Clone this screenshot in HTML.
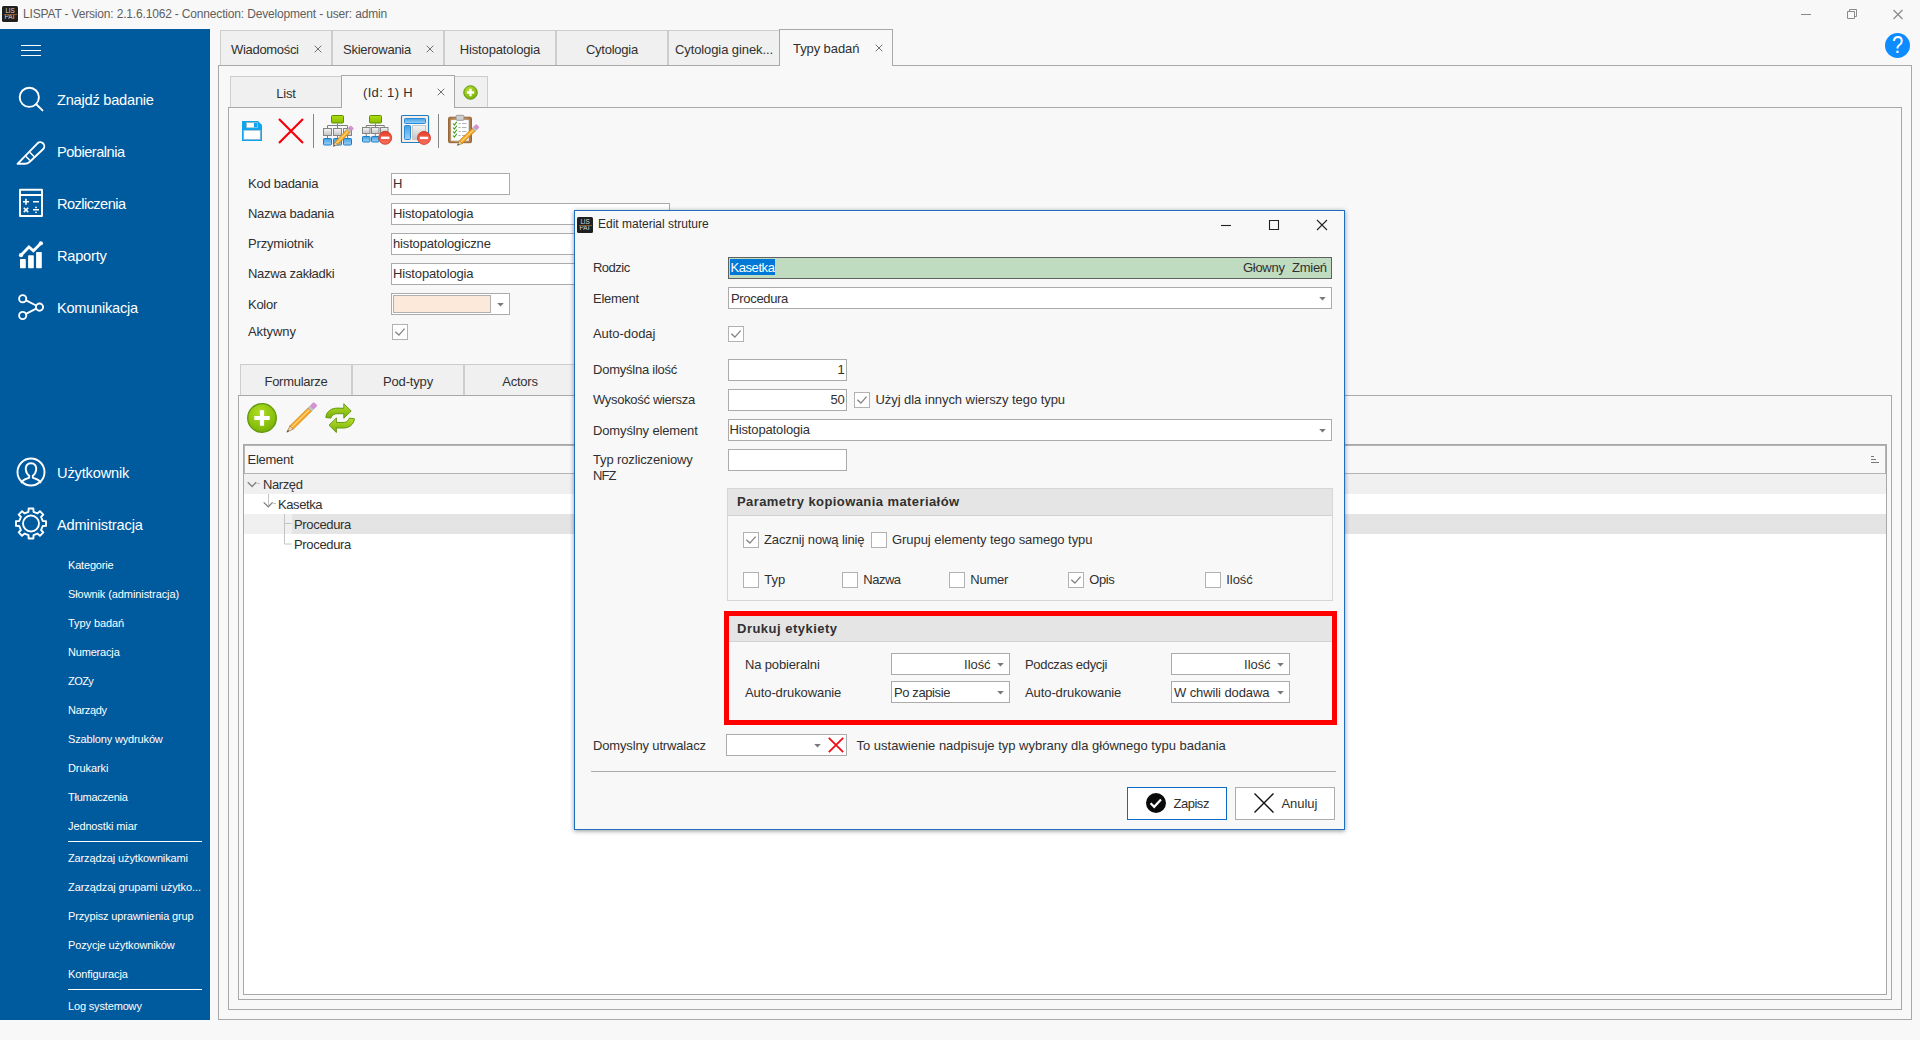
<!DOCTYPE html><html lang="pl"><head><meta charset="utf-8"><title>LISPAT</title><style>
html,body{margin:0;padding:0}
body{width:1920px;height:1040px;overflow:hidden;background:#f8f8f8;position:relative;font-family:"Liberation Sans",sans-serif;font-size:13px;color:#303030;line-height:16px}
.b{position:absolute;box-sizing:border-box}
.t{position:absolute;white-space:pre;line-height:16px}
.w{color:#fff}
.pnl{border:1px solid #a8a8a8;background:#f8f8f8}
.tab{background:#f0f0f0;border:1px solid #cdcdcd;border-bottom:none}
.tabA{background:#f8f8f8;border:1px solid #a8a8a8;border-bottom:none}
.inp{background:#fff;border:1px solid #ababab}
.chk{background:#fff;border:1px solid #b2b2b2}
.ghd{background:#e5e5e5;border-bottom:1px solid #d2d2d2}
.grp{border:1px solid #d6d6d6;background:#f8f8f8}
svg{position:absolute;overflow:visible}
</style></head><body>
<div class="b" style="left:2px;top:6px;width:16px;height:16px;background:#1f1f1f;border-radius:1.5px;box-shadow:0 0 0 1px #fff;color:#dcdcdc;font-size:6.4px;line-height:6.6px;text-align:center;letter-spacing:-0.2px;padding-top:1.8px">LIS<br>PAT</div>
<div class="b " style="left:3.5px;top:13.7px;width:13px;height:0.6px;background:#8a5a2c"></div>
<div class="t " style="left:23px;top:5.84px;font-size:12px;letter-spacing:-0.17px;color:#5f5f5f">LISPAT - Version: 2.1.6.1062 - Connection: Development - user: admin</div>
<svg style="left:1790px;top:0" width="130" height="29" viewBox="0 0 130 29"><g stroke="#8a8a8a" stroke-width="1" fill="none"><path d="M11 14.500h10"/><path d="M57.500 11.500h7v7h-7z"/><path d="M59.500 11.500v-2h7v7h-2"/><path d="M103.500 10l9 9M112.500 10l-9 9" stroke-width="1.200"/></g></svg>
<div class="b" style="left:1885px;top:33px;width:25px;height:25px;border-radius:50%;background:#0c8cff;color:#fff;font-size:23.500px;line-height:25px;text-align:center"><span style="display:inline-block;transform:scaleX(.86)">?</span></div>
<div class="b " style="left:0px;top:29px;width:210px;height:991px;background:#005a9e"></div>
<div class="b " style="left:21px;top:45px;width:20px;height:1.2px;background:#fff"></div>
<div class="b " style="left:21px;top:50px;width:20px;height:1.2px;background:#fff"></div>
<div class="b " style="left:21px;top:55px;width:20px;height:1.2px;background:#fff"></div>
<div class="t w" style="left:57px;top:91.94px;font-size:14.6px;letter-spacing:-0.22px;">Znajdź badanie</div>
<div class="t w" style="left:57px;top:143.94px;font-size:14.6px;letter-spacing:-0.50px;">Pobieralnia</div>
<div class="t w" style="left:57px;top:195.94px;font-size:14.6px;letter-spacing:-0.56px;">Rozliczenia</div>
<div class="t w" style="left:57px;top:247.94px;font-size:14.6px;letter-spacing:-0.22px;">Raporty</div>
<div class="t w" style="left:57px;top:299.94px;font-size:14.6px;letter-spacing:-0.25px;">Komunikacja</div>
<div class="t w" style="left:57px;top:464.94px;font-size:14.6px;letter-spacing:-0.16px;">Użytkownik</div>
<div class="t w" style="left:57px;top:516.94px;font-size:14.6px;letter-spacing:-0.14px;">Administracja</div>
<div class="t w" style="left:68px;top:557.19px;font-size:11px;letter-spacing:-0.18px;">Kategorie</div>
<div class="t w" style="left:68px;top:586.19px;font-size:11px;letter-spacing:-0.09px;">Słownik (administracja)</div>
<div class="t w" style="left:68px;top:615.19px;font-size:11px;letter-spacing:-0.08px;">Typy badań</div>
<div class="t w" style="left:68px;top:644.19px;font-size:11px;letter-spacing:-0.18px;">Numeracja</div>
<div class="t w" style="left:68px;top:673.19px;font-size:11px;letter-spacing:-0.56px;">ZOZy</div>
<div class="t w" style="left:68px;top:702.19px;font-size:11px;letter-spacing:-0.31px;">Narządy</div>
<div class="t w" style="left:68px;top:731.19px;font-size:11px;letter-spacing:-0.15px;">Szablony wydruków</div>
<div class="t w" style="left:68px;top:760.19px;font-size:11px;letter-spacing:-0.08px;">Drukarki</div>
<div class="t w" style="left:68px;top:789.19px;font-size:11px;letter-spacing:-0.25px;">Tłumaczenia</div>
<div class="t w" style="left:68px;top:818.19px;font-size:11px;letter-spacing:-0.12px;">Jednostki miar</div>
<div class="t w" style="left:68px;top:850.19px;font-size:11px;letter-spacing:-0.13px;">Zarządzaj użytkownikami</div>
<div class="t w" style="left:68px;top:879.19px;font-size:11px;letter-spacing:-0.08px;">Zarządzaj grupami użytko...</div>
<div class="t w" style="left:68px;top:908.19px;font-size:11px;letter-spacing:-0.14px;">Przypisz uprawnienia grup</div>
<div class="t w" style="left:68px;top:937.19px;font-size:11px;letter-spacing:-0.14px;">Pozycje użytkowników</div>
<div class="t w" style="left:68px;top:966.19px;font-size:11px;letter-spacing:-0.12px;">Konfiguracja</div>
<div class="t w" style="left:68px;top:998.19px;font-size:11px;letter-spacing:-0.16px;">Log systemowy</div>
<div class="b " style="left:68px;top:841px;width:134px;height:1.3px;background:#fff"></div>
<div class="b " style="left:68px;top:989px;width:134px;height:1.3px;background:#fff"></div>
<svg style="left:0;top:0" width="60" height="560" viewBox="0 0 60 560">
<g stroke="#fff" fill="none" stroke-width="1.9" stroke-linecap="round" stroke-linejoin="round"><circle cx="29.300" cy="97.300" r="9.600"/><path d="M36.200 104.200l6.300 6.200"/></g>
<g stroke="#fff" fill="none" stroke-width="1.9" stroke-linecap="round" stroke-linejoin="round" stroke-linejoin="miter"><path d="M17.500 163.800L25 163.800Q27.500 163.800 29.500 162L43 149.200A3.900 3.900 0 0 0 37.500 143.300Z"/><path d="M26.300 156.800l3.200 3.200M30.300 152.800l3.200 3.200" stroke-width="1.500"/></g>
<g stroke="#fff" fill="none" stroke-width="1.9" stroke-linecap="round" stroke-linejoin="round" stroke-linejoin="miter"><rect x="20" y="189.700" width="22" height="26.300"/><path d="M20 195h22"/><g stroke-width="1.600" stroke-linecap="butt"><path d="M23 201.800h6M26 198.800v6M33 201.800h6M23.800 207.700l4.400 4.400M28.200 207.700l-4.400 4.400M33 209.800h6"/></g><circle cx="36" cy="207.400" r="0.900" fill="#fff" stroke="none"/><circle cx="36" cy="212.300" r="0.900" fill="#fff" stroke="none"/></g>
<g fill="#fff"><rect x="20" y="259" width="5.800" height="9.200" rx="0.800"/><rect x="28.100" y="255.300" width="5.700" height="12.900" rx="0.800"/><rect x="36.100" y="251.900" width="5.700" height="16.300" rx="0.800"/><circle cx="21" cy="255.200" r="2.100"/><circle cx="40.900" cy="243.300" r="2.100"/></g><path d="M21 255.200L28.900 247L33.400 250.800L40.900 243.300" stroke="#fff" stroke-width="2.800" fill="none" stroke-linejoin="miter"/>
<g stroke="#fff" fill="none" stroke-width="1.9" stroke-linecap="round" stroke-linejoin="round" stroke-width="1.700"><circle cx="22.700" cy="298.700" r="3.600"/><circle cx="22.700" cy="315.500" r="3.600"/><circle cx="39.500" cy="307.100" r="3.600"/><path d="M26 300.300l10.200 5.200M26 313.900l10.200-5.200"/></g>
<g stroke="#fff" fill="none" stroke-width="1.9" stroke-linecap="round" stroke-linejoin="round" stroke-width="1.200"><circle cx="31" cy="472" r="13.500"/><path d="M31 463.200c-3.800 0-5.600 2.800-5.200 6.400c.4 3.200 2 5.200 3.400 6.200v1.800c-2 1.400-6 1.200-7.600 4.800M31 463.200c3.800 0 5.600 2.800 5.200 6.400c-.4 3.200-2 5.200-3.400 6.200v1.800c2 1.400 6 1.200 7.600 4.800"/></g>
<g stroke="#fff" fill="none" stroke-width="1.9" stroke-linecap="round" stroke-linejoin="round" stroke-width="1.300" stroke-linejoin="miter"><path d="M28.62 508.49L33.38 508.49L33.53 511.77L37.51 513.42L39.93 511.20L43.30 514.57L41.08 516.99L42.73 520.97L46.01 521.12L46.01 525.88L42.73 526.03L41.08 530.01L43.30 532.43L39.93 535.80L37.51 533.58L33.53 535.23L33.38 538.51L28.62 538.51L28.47 535.23L24.49 533.58L22.07 535.80L18.70 532.43L20.92 530.01L19.27 526.03L15.99 525.88L15.99 521.12L19.27 520.97L20.92 516.99L18.70 514.57L22.07 511.20L24.49 513.42L28.47 511.77Z"/><circle cx="31" cy="523.500" r="8"/></g>
</svg>
<div class="b pnl" style="left:218px;top:65px;width:1694px;height:955px;"></div>
<div class="b tab" style="left:220px;top:30px;width:112px;height:35px;"></div>
<div class="t " style="left:231px;top:41.50px;letter-spacing:-0.31px;">Wiadomości</div>
<svg style="left:314px;top:45px" width="8" height="8" viewBox="0 0 8 8"><path d="M0.700 0.700l6.600 6.600M7.300 0.700l-6.600 6.600" stroke="#707070" stroke-width="1" fill="none"/></svg>
<div class="b tab" style="left:332px;top:30px;width:112px;height:35px;"></div>
<div class="t " style="left:343px;top:41.50px;letter-spacing:-0.26px;">Skierowania</div>
<svg style="left:426px;top:45px" width="8" height="8" viewBox="0 0 8 8"><path d="M0.700 0.700l6.600 6.600M7.300 0.700l-6.600 6.600" stroke="#707070" stroke-width="1" fill="none"/></svg>
<div class="b tab" style="left:444px;top:30px;width:112px;height:35px;"></div>
<div class="t " style="left:459.779014px;top:41.50px;letter-spacing:-0.14px;">Histopatologia</div>
<div class="b tab" style="left:556px;top:30px;width:112px;height:35px;"></div>
<div class="t " style="left:585.95879px;top:41.50px;letter-spacing:-0.24px;">Cytologia</div>
<div class="b tab" style="left:668px;top:30px;width:112px;height:35px;"></div>
<div class="t " style="left:674.923076px;top:41.50px;letter-spacing:-0.09px;">Cytologia ginek...</div>
<div class="b tabA" style="left:779px;top:29px;width:114px;height:37px;"></div>
<div class="t " style="left:793px;top:40.50px;letter-spacing:-0.09px;">Typy badań</div>
<svg style="left:875px;top:44px" width="8" height="8" viewBox="0 0 8 8"><path d="M0.700 0.700l6.600 6.600M7.300 0.700l-6.600 6.600" stroke="#707070" stroke-width="1" fill="none"/></svg>
<div class="b pnl" style="left:228px;top:107px;width:1674px;height:903px;"></div>
<div class="b tab" style="left:230px;top:76px;width:112px;height:31px;"></div>
<div class="t " style="left:276.315624px;top:85.50px;letter-spacing:-0.22px;">List</div>
<div class="b tab" style="left:454px;top:76px;width:34px;height:31px;"></div>
<div class="b tabA" style="left:341px;top:75px;width:114px;height:33px;"></div>
<div class="t " style="left:363px;top:84.50px;letter-spacing:0.34px;">(Id: 1) H</div>
<svg style="left:437px;top:88px" width="8" height="8" viewBox="0 0 8 8"><path d="M0.700 0.700l6.600 6.600M7.300 0.700l-6.600 6.600" stroke="#707070" stroke-width="1" fill="none"/></svg>
<svg style="left:463px;top:85px" width="15" height="15" viewBox="0 0 15 15"><defs><radialGradient id="g0" cx="0.4" cy="0.3" r="0.8"><stop offset="0" stop-color="#b4dc2c"/><stop offset="1" stop-color="#74aa08"/></radialGradient></defs><circle cx="7.500" cy="7.500" r="6.800" fill="url(#g0)" stroke="#5e960a" stroke-width="0.900"/><path d="M7.500 3.800v7.400M3.800 7.500h7.400" stroke="#fff" stroke-width="2.300"/></svg>
<svg style="left:0;top:0" width="500" height="160" viewBox="0 0 500 160"><defs><linearGradient id="gn" x1="0" y1="0" x2="0" y2="1"><stop offset="0" stop-color="#b2de10"/><stop offset="1" stop-color="#86bc00"/></linearGradient><linearGradient id="gg2" x1="0" y1="0" x2="0" y2="1"><stop offset="0" stop-color="#f4f4f4"/><stop offset="1" stop-color="#c4c4c4"/></linearGradient><linearGradient id="gb" x1="0" y1="0" x2="0" y2="1"><stop offset="0" stop-color="#3ea0e6"/><stop offset="1" stop-color="#9fd2f8"/></linearGradient><linearGradient id="gr" x1="0" y1="0" x2="0" y2="1"><stop offset="0" stop-color="#e8402c"/><stop offset="1" stop-color="#f8705c"/></linearGradient><linearGradient id="gw" x1="0" y1="0" x2="1" y2="0"><stop offset="0" stop-color="#a87440"/><stop offset="0.5" stop-color="#cfa070"/><stop offset="1" stop-color="#a87440"/></linearGradient></defs><path d="M242 121h16l4 4v16h-20z" fill="#0ea5ee"/><rect x="243.800" y="130.300" width="16.400" height="9" fill="#fff" stroke="#a8b8c2" stroke-width="0.600"/><rect x="246.500" y="122.600" width="11.200" height="5.200" fill="#fff" stroke="#9ab0bc" stroke-width="0.600"/><rect x="254" y="123" width="3.200" height="4.400" fill="#0ea5ee"/><path d="M279 119l24 24M303 119l-24 24" stroke="#f4000c" stroke-width="2.200" fill="none"/><path d="M313.500 114v34M438.500 114v34" stroke="#868686" stroke-width="1"/><rect x="331.5" y="115.5" width="12" height="7.500" rx="1" fill="url(#gn)" stroke="#5a9206" stroke-width="1"/><path d="M337.5 123.5V128.5M327.5 128.5V125.5H347.5V128.5" stroke="#7e7e7e" fill="none" stroke-width="1"/><rect x="323.5" y="128.5" width="8" height="7" fill="url(#gg2)" stroke="#858585" stroke-width="1"/><path d="M327.5 135.5V138.5" stroke="#7e7e7e" stroke-width="1"/><rect x="323.5" y="138.5" width="8" height="6.5" rx="0.800" fill="url(#gb)" stroke="#1c7cc0" stroke-width="1"/><rect x="333.5" y="128.5" width="8" height="7" fill="url(#gg2)" stroke="#858585" stroke-width="1"/><path d="M337.5 135.5V138.5" stroke="#7e7e7e" stroke-width="1"/><rect x="333.5" y="138.5" width="8" height="6.5" rx="0.800" fill="url(#gb)" stroke="#1c7cc0" stroke-width="1"/><rect x="343.5" y="128.5" width="8" height="7" fill="url(#gg2)" stroke="#858585" stroke-width="1"/><path d="M347.5 135.5V138.5" stroke="#7e7e7e" stroke-width="1"/><rect x="343.5" y="138.5" width="8" height="6.5" rx="0.800" fill="url(#gb)" stroke="#1c7cc0" stroke-width="1"/><g transform="translate(333.4 146.4) rotate(-45.90)"><path d="M0 0L4.59 -2.1L4.59 2.1Z" fill="#f1d3a0" stroke="#7a5a28" stroke-width="0.500"/><path d="M0 0L1.62 -0.76L1.62 0.76Z" fill="#3a3a3a"/><rect x="4.59" y="-2.1" width="17.02" height="4.2" fill="#f7a51c" stroke="#b8720c" stroke-width="0.500"/><rect x="4.59" y="-0.73" width="17.02" height="1.26" fill="#fdd27a"/><rect x="21.61" y="-2.1" width="2.16" height="4.2" fill="#c4c4c4" stroke="#8e8e8e" stroke-width="0.400"/><rect x="23.77" y="-2.1" width="3.24" height="4.2" rx="1.200" fill="#dd8fd6" stroke="#b46eb0" stroke-width="0.400"/></g><rect x="369.5" y="115.5" width="12" height="7.500" rx="1" fill="url(#gn)" stroke="#5a9206" stroke-width="1"/><path d="M375.5 123.5V127.5M366.25 127.5V125.5H384.25V127.5" stroke="#7e7e7e" fill="none" stroke-width="1"/><rect x="362.5" y="127.5" width="7.5" height="6" fill="url(#gg2)" stroke="#858585" stroke-width="1"/><path d="M366.25 133.5V136.5" stroke="#7e7e7e" stroke-width="1"/><rect x="362.5" y="136.5" width="7.5" height="5.5" rx="0.800" fill="url(#gb)" stroke="#1c7cc0" stroke-width="1"/><rect x="371.5" y="127.5" width="7.5" height="6" fill="url(#gg2)" stroke="#858585" stroke-width="1"/><path d="M375.25 133.5V136.5" stroke="#7e7e7e" stroke-width="1"/><rect x="371.5" y="136.5" width="7.5" height="5.5" rx="0.800" fill="url(#gb)" stroke="#1c7cc0" stroke-width="1"/><rect x="380.5" y="127.5" width="7.5" height="6" fill="url(#gg2)" stroke="#858585" stroke-width="1"/><circle cx="385.2" cy="137.8" r="6.5" fill="url(#gr)" stroke="#c8311f" stroke-width="0.800"/><rect x="381.0" y="136.60000000000002" width="8.400" height="2.400" fill="#fff"/><rect x="401.500" y="115.500" width="27" height="27" rx="1" fill="#fff" stroke="#1a7fc4" stroke-width="1.200"/><rect x="403" y="117" width="24" height="24" fill="none" stroke="#f6dccc" stroke-width="1"/><rect x="404.500" y="118.500" width="21" height="5" rx="0.800" fill="url(#gb)" stroke="#2a8ad4" stroke-width="1"/><rect x="404.500" y="125.500" width="6" height="14" rx="0.800" fill="url(#gb)" stroke="#2a8ad4" stroke-width="1"/><rect x="412.500" y="125.500" width="13" height="14" fill="url(#gg2)" stroke="#c8c8c8" stroke-width="1"/><circle cx="424" cy="137.9" r="6.5" fill="url(#gr)" stroke="#c8311f" stroke-width="0.800"/><rect x="419.8" y="136.70000000000002" width="8.400" height="2.400" fill="#fff"/><rect x="448.500" y="117.200" width="23" height="25.500" rx="1.200" fill="url(#gw)" stroke="#8e5e2c" stroke-width="0.900"/><rect x="451" y="120" width="17.800" height="20.800" fill="#fff" stroke="#c8d0dc" stroke-width="0.500"/><rect x="456" y="115.300" width="8" height="5" rx="1.200" fill="#cfcfcf" stroke="#8c8c8c" stroke-width="0.800"/><path d="M453 123.5l1.400 1.600l2.400-3.400" stroke="#3a9a10" stroke-width="1.100" fill="none"/><path d="M458.500 123.5h2.200M462 123.5h4.500" stroke="#a8a8a8" stroke-width="0.900"/><path d="M453 127.5l1.400 1.600l2.400-3.400" stroke="#3a9a10" stroke-width="1.100" fill="none"/><path d="M458.500 127.5h2.200M462 127.5h4.500" stroke="#a8a8a8" stroke-width="0.900"/><path d="M453 131.5l1.400 1.600l2.400-3.400" stroke="#3a9a10" stroke-width="1.100" fill="none"/><path d="M458.500 131.5h2.200M462 131.5h4.500" stroke="#a8a8a8" stroke-width="0.900"/><path d="M453 135.5l1.400 1.600l2.400-3.400" stroke="#3a9a10" stroke-width="1.100" fill="none"/><path d="M458.500 135.5h2.200M462 135.5h4.500" stroke="#a8a8a8" stroke-width="0.900"/><g transform="translate(457.4 145.4) rotate(-43.85)"><path d="M0 0L4.81 -2.1L4.81 2.1Z" fill="#f1d3a0" stroke="#7a5a28" stroke-width="0.500"/><path d="M0 0L1.70 -0.76L1.70 0.76Z" fill="#3a3a3a"/><rect x="4.81" y="-2.1" width="17.82" height="4.2" fill="#f7a51c" stroke="#b8720c" stroke-width="0.500"/><rect x="4.81" y="-0.73" width="17.82" height="1.26" fill="#fdd27a"/><rect x="22.63" y="-2.1" width="2.26" height="4.2" fill="#c4c4c4" stroke="#8e8e8e" stroke-width="0.400"/><rect x="24.90" y="-2.1" width="3.39" height="4.2" rx="1.200" fill="#dd8fd6" stroke="#b46eb0" stroke-width="0.400"/></g></svg>
<div class="t " style="left:248px;top:175.50px;letter-spacing:-0.26px;">Kod badania</div>
<div class="t " style="left:248px;top:205.50px;letter-spacing:-0.29px;">Nazwa badania</div>
<div class="t " style="left:248px;top:235.50px;letter-spacing:-0.17px;">Przymiotnik</div>
<div class="t " style="left:248px;top:265.50px;letter-spacing:-0.29px;">Nazwa zakładki</div>
<div class="t " style="left:248px;top:296.50px;letter-spacing:-0.27px;">Kolor</div>
<div class="t " style="left:248px;top:323.50px;letter-spacing:-0.07px;">Aktywny</div>
<div class="b inp" style="left:391px;top:173px;width:119px;height:22px;"></div>
<div class="t " style="left:393px;top:175.50px;letter-spacing:-0.71px;">H</div>
<div class="b inp" style="left:391px;top:203px;width:279px;height:22px;"></div>
<div class="t " style="left:393px;top:205.50px;letter-spacing:-0.14px;">Histopatologia</div>
<div class="b inp" style="left:391px;top:233px;width:279px;height:22px;"></div>
<div class="t " style="left:393px;top:235.50px;letter-spacing:-0.16px;">histopatologiczne</div>
<div class="b inp" style="left:391px;top:263px;width:279px;height:22px;"></div>
<div class="t " style="left:393px;top:265.50px;letter-spacing:-0.14px;">Histopatologia</div>
<div class="b inp" style="left:391px;top:293px;width:119px;height:22px;"></div>
<div class="b " style="left:393px;top:295px;width:98px;height:18px;background:#fde9d9;border:1px solid #b0b0b0"></div>
<svg style="left:496.5px;top:303.0px" width="7" height="4" viewBox="0 0 7 4"><path d="M0.200 0h6.600l-3.300 3.500z" fill="#7a7a7a"/></svg>
<div class="b chk" style="left:392px;top:324px;width:16px;height:16px;"></div>
<svg style="left:392px;top:324px" width="16" height="16" viewBox="0 0 16 16"><path d="M3.300 7.700l3.600 3.400l5.700-6.500" stroke="#858585" stroke-width="1.400" fill="none"/></svg>
<div class="b pnl" style="left:238px;top:395px;width:1654px;height:605px;"></div>
<div class="b tab" style="left:240px;top:364px;width:112px;height:31px;"></div>
<div class="t " style="left:264.493668px;top:373.50px;letter-spacing:-0.27px;">Formularze</div>
<div class="b tab" style="left:352px;top:364px;width:112px;height:31px;"></div>
<div class="t " style="left:382.999154px;top:373.50px;letter-spacing:-0.16px;">Pod-typy</div>
<div class="b tab" style="left:464px;top:364px;width:112px;height:31px;"></div>
<div class="t " style="left:502.37161000000003px;top:373.50px;letter-spacing:-0.26px;">Actors</div>
<svg style="left:0;top:0" width="400" height="440" viewBox="0 0 400 440"><defs><radialGradient id="gg" cx="0.42" cy="0.3" r="0.8"><stop offset="0" stop-color="#b0dc24"/><stop offset="0.7" stop-color="#86be0a"/><stop offset="1" stop-color="#6ea406"/></radialGradient><linearGradient id="ga" x1="0" y1="0" x2="0" y2="1"><stop offset="0" stop-color="#b6e02c"/><stop offset="1" stop-color="#78ae08"/></linearGradient></defs><circle cx="262" cy="418" r="14.300" fill="url(#gg)" stroke="#5e980a" stroke-width="1.300"/><path d="M262 410.300v15.400M254.300 418h15.400" stroke="#fff" stroke-width="4.200"/><g transform="translate(286.8 432.2) rotate(-44.50)"><path d="M0 0L6.84 -2.4L6.84 2.4Z" fill="#f1d3a0" stroke="#7a5a28" stroke-width="0.500"/><path d="M0 0L2.41 -0.86L2.41 0.86Z" fill="#3a3a3a"/><rect x="6.84" y="-2.4" width="25.35" height="4.8" fill="#f7a51c" stroke="#b8720c" stroke-width="0.500"/><rect x="6.84" y="-0.84" width="25.35" height="1.44" fill="#fdd27a"/><rect x="32.19" y="-2.4" width="3.22" height="4.8" fill="#c4c4c4" stroke="#8e8e8e" stroke-width="0.400"/><rect x="35.41" y="-2.4" width="4.83" height="4.8" rx="1.200" fill="#dd8fd6" stroke="#b46eb0" stroke-width="0.400"/></g><g fill="url(#ga)" stroke="#5c9408" stroke-width="0.900" stroke-linejoin="round"><path d="M325.800 417.500c0.600-6.200 5.600-9.600 12.200-9.400l5.800 0.200v-4.600l7.400 7.300l-7.400 7.300v-4.600h-5.600c-3.600-0.200-6.200 1-7.400 4.400z"/><path d="M354.400 418.700c-0.600 6.200-5.600 9.600-12.200 9.400l-5.800-0.200v4.600l-7.400-7.300l7.400-7.300v4.600h5.600c3.600 0.200 6.200-1 7.400-4.400z"/></g></svg>
<div class="b " style="left:243px;top:444px;width:1644px;height:551px;border:1px solid #a8a8a8;background:#fff"></div>
<div class="b " style="left:244px;top:445px;width:1642px;height:29px;border:1px solid #b4b4b4;background:#f8f8f8"></div>
<div class="t " style="left:247.5px;top:451.50px;letter-spacing:-0.26px;">Element</div>
<svg style="left:1871px;top:455px" width="10" height="10" viewBox="0 0 10 10"><path d="M0 1.500h3M0 4.500h5M0 7.500h8" stroke="#777" stroke-width="1" fill="none"/></svg>
<div class="b " style="left:244px;top:474px;width:1642px;height:20px;background:#f0f0f0"></div>
<div class="b " style="left:244px;top:514px;width:1642px;height:20px;background:#f0f0f0"></div>
<div class="b " style="left:292px;top:514px;width:1594px;height:20px;background:#e4e4e4"></div>
<div class="t " style="left:263px;top:476.50px;letter-spacing:-0.40px;">Narzęd</div>
<div class="t " style="left:278px;top:496.50px;letter-spacing:-0.40px;">Kasetka</div>
<div class="t " style="left:294px;top:516.50px;letter-spacing:-0.33px;">Procedura</div>
<div class="t " style="left:294px;top:536.50px;letter-spacing:-0.33px;">Procedura</div>
<svg style="left:244px;top:474px" width="50" height="80" viewBox="0 0 50 80"><g stroke="#808080" fill="none" stroke-width="1.300"><path d="M3.800 8.200l4.300 4.300l4.100-4.300"/><path d="M19.700 28.400l4.600 4.400l4.300-4.400"/></g><g stroke="#c4c4c4" fill="none" stroke-width="1"><path d="M12.500 9.500h3.500M24.500 20v11.500M29 29.500h3M40.500 40v30h7M40.500 49.500h7"/></g></svg>
<div class="b " style="left:574px;top:210px;width:771px;height:620px;background:#f8f8f8;border:1px solid #1f6fbe;box-shadow:0 0.500px 4.500px rgba(0,0,0,.42)"></div>
<div class="b" style="left:577px;top:217px;width:16px;height:16px;background:#1f1f1f;border-radius:1.5px;color:#dcdcdc;font-size:6.4px;line-height:6.6px;text-align:center;letter-spacing:-0.2px;padding-top:1.8px">LIS<br>PAT</div>
<div class="b " style="left:578.5px;top:224.7px;width:13px;height:0.6px;background:#8a5a2c"></div>
<div class="t " style="left:598px;top:215.84px;font-size:12px;color:#2b2b2b">Edit material struture</div>
<svg style="left:1200px;top:211px" width="145" height="28" viewBox="0 0 145 28"><g stroke="#222" stroke-width="1.100" fill="none"><path d="M21 14.500h10"/><path d="M69.500 9.500h9v9h-9z"/><path d="M117 9l10 10M127 9l-10 10"/></g></svg>
<div class="t " style="left:593px;top:259.50px;letter-spacing:-0.52px;">Rodzic</div>
<div class="t " style="left:593px;top:290.50px;letter-spacing:-0.26px;">Element</div>
<div class="t " style="left:593px;top:325.50px;letter-spacing:-0.05px;">Auto-dodaj</div>
<div class="t " style="left:593px;top:361.50px;letter-spacing:-0.24px;">Domyślna ilość</div>
<div class="t " style="left:593px;top:391.50px;letter-spacing:-0.31px;">Wysokość wiersza</div>
<div class="t " style="left:593px;top:422.50px;letter-spacing:-0.14px;">Domyślny element</div>
<div class="t " style="left:593px;top:451.50px;letter-spacing:-0.13px;">Typ rozliczeniowy</div>
<div class="t " style="left:593px;top:467.50px;letter-spacing:-0.95px;">NFZ</div>
<div class="t " style="left:593px;top:737.50px;letter-spacing:-0.15px;">Domyslny utrwalacz</div>
<div class="b " style="left:728px;top:257px;width:604px;height:22px;background:#c0dcc0;border:1px solid #606060"></div>
<div class="b " style="left:730px;top:259px;width:45px;height:16px;background:#0078d7"></div>
<div class="t w" style="left:730.5px;top:259.50px;letter-spacing:-0.43px;">Kasetka</div>
<div class="t " style="left:1243px;top:260.00px;letter-spacing:-0.29px;">Głowny</div>
<div class="t " style="left:1292px;top:260.00px;letter-spacing:-0.26px;">Zmień</div>
<div class="b inp" style="left:728px;top:287px;width:604px;height:22px;"></div>
<div class="t " style="left:731px;top:290.50px;letter-spacing:-0.33px;">Procedura</div>
<svg style="left:1318.5px;top:297.0px" width="7" height="4" viewBox="0 0 7 4"><path d="M0.200 0h6.600l-3.300 3.500z" fill="#7a7a7a"/></svg>
<div class="b chk" style="left:728px;top:326px;width:16px;height:16px;"></div>
<svg style="left:728px;top:326px" width="16" height="16" viewBox="0 0 16 16"><path d="M3.300 7.700l3.600 3.400l5.700-6.500" stroke="#858585" stroke-width="1.400" fill="none"/></svg>
<div class="b inp" style="left:728px;top:359px;width:119px;height:22px;"></div>
<div class="t " style="left:728px;top:361.50px;letter-spacing:-0.22px;width:116.5px;text-align:right;">1</div>
<div class="b inp" style="left:728px;top:389px;width:119px;height:22px;"></div>
<div class="t " style="left:728px;top:391.50px;letter-spacing:-0.22px;width:116.5px;text-align:right;">50</div>
<div class="b chk" style="left:854px;top:392px;width:16px;height:16px;"></div>
<svg style="left:854px;top:392px" width="16" height="16" viewBox="0 0 16 16"><path d="M3.300 7.700l3.600 3.400l5.700-6.500" stroke="#858585" stroke-width="1.400" fill="none"/></svg>
<div class="t " style="left:875.5px;top:391.50px;letter-spacing:-0.06px;">Użyj dla innych wierszy tego typu</div>
<div class="b inp" style="left:728px;top:419px;width:604px;height:22px;"></div>
<div class="t " style="left:729.5px;top:422.00px;letter-spacing:-0.14px;">Histopatologia</div>
<svg style="left:1318.5px;top:428.5px" width="7" height="4" viewBox="0 0 7 4"><path d="M0.200 0h6.600l-3.300 3.500z" fill="#7a7a7a"/></svg>
<div class="b inp" style="left:728px;top:449px;width:119px;height:22px;"></div>
<div class="b grp" style="left:727px;top:488px;width:606px;height:113px;"></div>
<div class="b ghd" style="left:728px;top:489px;width:604px;height:27px;"></div>
<div class="t " style="left:737px;top:494.00px;letter-spacing:0.42px;font-weight:bold;">Parametry kopiowania materiałów</div>
<div class="b chk" style="left:743px;top:532px;width:16px;height:16px;"></div>
<svg style="left:743px;top:532px" width="16" height="16" viewBox="0 0 16 16"><path d="M3.300 7.700l3.600 3.400l5.700-6.500" stroke="#858585" stroke-width="1.400" fill="none"/></svg>
<div class="t " style="left:764px;top:531.50px;letter-spacing:-0.12px;">Zacznij nową linię</div>
<div class="b chk" style="left:871px;top:532px;width:16px;height:16px;"></div>
<div class="t " style="left:892px;top:531.50px;letter-spacing:-0.06px;">Grupuj elementy tego samego typu</div>
<div class="b chk" style="left:743px;top:572px;width:16px;height:16px;"></div>
<div class="t " style="left:764.3px;top:571.50px;letter-spacing:0.02px;">Typ</div>
<div class="b chk" style="left:842px;top:572px;width:16px;height:16px;"></div>
<div class="t " style="left:863.3px;top:571.50px;letter-spacing:-0.49px;">Nazwa</div>
<div class="b chk" style="left:949px;top:572px;width:16px;height:16px;"></div>
<div class="t " style="left:970.3px;top:571.50px;letter-spacing:-0.22px;">Numer</div>
<div class="b chk" style="left:1068px;top:572px;width:16px;height:16px;"></div>
<svg style="left:1068px;top:572px" width="16" height="16" viewBox="0 0 16 16"><path d="M3.300 7.700l3.600 3.400l5.700-6.500" stroke="#858585" stroke-width="1.400" fill="none"/></svg>
<div class="t " style="left:1089.3px;top:571.50px;letter-spacing:-0.46px;">Opis</div>
<div class="b chk" style="left:1205px;top:572px;width:16px;height:16px;"></div>
<div class="t " style="left:1226.3px;top:571.50px;letter-spacing:-0.07px;">Ilość</div>
<div class="b grp" style="left:727px;top:616px;width:606px;height:108px;border-color:#e8e8e8"></div>
<div class="b ghd" style="left:728px;top:616px;width:604px;height:26px;"></div>
<div class="t " style="left:737px;top:620.50px;letter-spacing:0.49px;font-weight:bold;">Drukuj etykiety</div>
<div class="b " style="left:724px;top:611px;width:613px;height:114px;border:5px solid #fe0000"></div>
<div class="t " style="left:745px;top:656.50px;letter-spacing:-0.15px;">Na pobieralni</div>
<div class="t " style="left:1025px;top:656.50px;letter-spacing:-0.33px;">Podczas edycji</div>
<div class="t " style="left:745px;top:684.50px;letter-spacing:-0.09px;">Auto-drukowanie</div>
<div class="t " style="left:1025px;top:684.50px;letter-spacing:-0.09px;">Auto-drukowanie</div>
<div class="b inp" style="left:891px;top:653px;width:119px;height:22px;"></div>
<div class="t " style="left:891px;top:656.50px;letter-spacing:-0.07px;width:99.5px;text-align:right;">Ilość</div>
<svg style="left:996.5px;top:662.5px" width="7" height="4" viewBox="0 0 7 4"><path d="M0.200 0h6.600l-3.300 3.500z" fill="#7a7a7a"/></svg>
<div class="b inp" style="left:1171px;top:653px;width:119px;height:22px;"></div>
<div class="t " style="left:1171px;top:656.50px;letter-spacing:-0.07px;width:99.5px;text-align:right;">Ilość</div>
<svg style="left:1276.5px;top:662.5px" width="7" height="4" viewBox="0 0 7 4"><path d="M0.200 0h6.600l-3.300 3.500z" fill="#7a7a7a"/></svg>
<div class="b inp" style="left:891px;top:681px;width:119px;height:22px;"></div>
<div class="t " style="left:894px;top:684.50px;letter-spacing:-0.40px;">Po zapisie</div>
<svg style="left:996.5px;top:690.5px" width="7" height="4" viewBox="0 0 7 4"><path d="M0.200 0h6.600l-3.300 3.500z" fill="#7a7a7a"/></svg>
<div class="b inp" style="left:1171px;top:681px;width:119px;height:22px;"></div>
<div class="t " style="left:1174px;top:684.50px;letter-spacing:-0.10px;">W chwili dodawa</div>
<svg style="left:1276.5px;top:690.5px" width="7" height="4" viewBox="0 0 7 4"><path d="M0.200 0h6.600l-3.300 3.500z" fill="#7a7a7a"/></svg>
<div class="b inp" style="left:726px;top:734px;width:121px;height:22px;"></div>
<svg style="left:813.5px;top:744.0px" width="7" height="4" viewBox="0 0 7 4"><path d="M0.200 0h6.600l-3.300 3.500z" fill="#7a7a7a"/></svg>
<svg style="left:828px;top:737px" width="16" height="16" viewBox="0 0 16 16"><path d="M0.800 0.800l14.400 14.400M15.200 0.800l-14.400 14.400" stroke="#f0101c" stroke-width="1.900" fill="none"/></svg>
<div class="t " style="left:856.5px;top:737.50px;">To ustawienie nadpisuje typ wybrany dla głównego typu badania</div>
<div class="b " style="left:591px;top:771px;width:745px;height:1px;background:#acacac"></div>
<div class="b " style="left:1127px;top:787px;width:100px;height:33px;background:#fff;border:1px solid #0a6cc8"></div>
<div class="b " style="left:1235px;top:787px;width:100px;height:33px;background:#fff;border:1px solid #adadad"></div>
<svg style="left:1146px;top:793px" width="20" height="20" viewBox="0 0 20 20"><circle cx="10" cy="10" r="10" fill="#0a0a0a"/><path d="M4.600 10.200l3.600 3.600l6.800-7.400" stroke="#fff" stroke-width="2.200" fill="none"/></svg>
<div class="t " style="left:1173.5px;top:795.50px;letter-spacing:-0.48px;">Zapisz</div>
<svg style="left:1254px;top:793px" width="20" height="20" viewBox="0 0 20 20"><path d="M0.500 0.500l19 19M19.500 0.500l-19 19" stroke="#111" stroke-width="1.400" fill="none"/></svg>
<div class="t " style="left:1281.5px;top:795.50px;letter-spacing:-0.06px;">Anuluj</div>
</body></html>
